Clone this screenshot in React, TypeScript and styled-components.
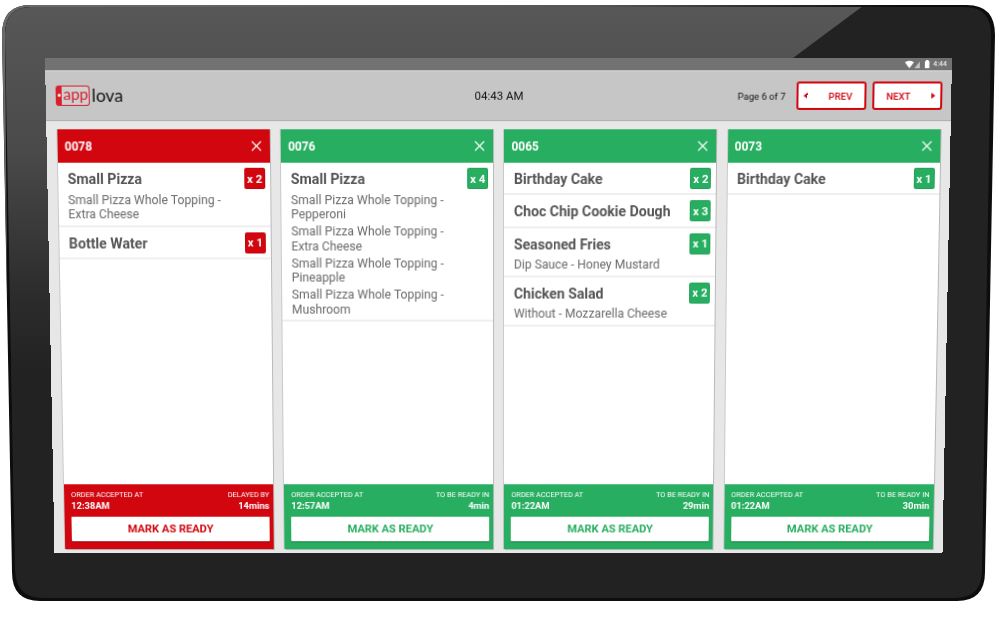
import styled, { createGlobalStyle } from 'styled-components';
import { X } from 'lucide-react';

const RED = '#d2060f';
const GREEN = '#27ae60';

const colors = { red: RED, green: GREEN };
type Tone = keyof typeof colors;

const GlobalStyle = createGlobalStyle`
  html, body {
    margin: 0;
    background: #fff;
    font-family: Roboto, "Liberation Sans", sans-serif;
  }
  * { box-sizing: border-box; }
`;

// Tablet
const Stage = styled.div`
  position: relative;
  width: 1000px;
  height: 639px;
  padding: 58px 48px 86px 45px;
  overflow: hidden;
  background: #fff;
`;

const Bezel = styled.svg`
  position: absolute;
  left: 0;
  top: 0;
`;

// the photo of the tablet is slightly tilted, so the screen is a trapezoid
const Screen = styled.div`
  position: relative;
  width: 907px;
  height: 495px;
  display: flex;
  flex-direction: column;
  transform-origin: 0 0;
  transform: matrix3d(1, 0, 0, 0, 0.0196, 1.0214, 0, 0.0000432, 0, 0, 1, 0, 0, 0, 0, 1);
`;

const StatusBar = styled.div`
  height: 12px;
  flex: none;
  display: flex;
  align-items: center;
  justify-content: flex-end;
  gap: 2px;
  padding-right: 5px;
  background: #727272;
  color: #e8e8e8;
  font-size: 7px;
  font-weight: 500;
`;

// Top bar
const TopBar = styled.header`
  height: 50px;
  flex: none;
  display: grid;
  grid-template-columns: 1fr auto 1fr;
  align-items: center;
  padding: 0 9px 0 10px;
  background: #c7c6c6;
  border-top: 1px solid #dadada;
  border-bottom: 1px solid #aeaeae;
`;

const Logo = styled.div`
  display: flex;
  align-items: center;
  gap: 2px;
`;

const LogoBadge = styled.div`
  position: relative;
  width: 34px;
  height: 20px;
  display: flex;
  align-items: center;
  justify-content: center;
  padding: 0 0 3px 1px;
  border: 1.5px solid #d6202c;
  border-left-width: 6px;
  border-radius: 3px;
  background: #cfcfcf;
  color: #d6202c;
  font-family: Lato, sans-serif;
  font-size: 15.5px;
  line-height: 1;

  &::before {
    content: '';
    position: absolute;
    left: -4.5px;
    top: 6.5px;
    width: 3px;
    height: 3px;
    border-radius: 50%;
    background: #fff;
  }
`;

const LogoWord = styled.span`
  color: #111;
  font-family: Lato, sans-serif;
  font-size: 17.5px;
  font-weight: 400;
  line-height: 1;
`;

const Clock = styled.div`
  color: #111;
  font-size: 11.5px;
`;

const Pager = styled.div`
  display: flex;
  align-items: center;
  justify-content: flex-end;
  gap: 6px;
`;

const PageLabel = styled.span`
  margin-right: 5px;
  color: #111;
  font-size: 9.5px;
`;

const PageButton = styled.button<{ $next?: boolean }>`
  width: 70px;
  height: 28px;
  display: flex;
  flex-direction: ${({ $next }) => ($next ? 'row-reverse' : 'row')};
  align-items: center;
  justify-content: space-between;
  padding: 0 5px;
  border: 2px solid ${RED};
  border-radius: 3px;
  background: #fff;
  color: ${RED};
  font-family: inherit;
  font-size: 9.6px;
  font-weight: 500;

  span {
    flex: 1;
    text-align: center;
    padding: ${({ $next }) => ($next ? '0 14px 0 0' : '0 0 0 14px')};
  }
`;

const Arrow = styled.i<{ $next?: boolean }>`
  width: 0;
  height: 0;
  border-top: 3.5px solid transparent;
  border-bottom: 3.5px solid transparent;
  ${({ $next }) => ($next ? `border-left: 4px solid ${RED};` : `border-right: 4px solid ${RED};`)}
`;

// Orders
const Board = styled.main`
  flex: 1;
  min-height: 0;
  display: grid;
  grid-template-columns: repeat(4, 213px);
  gap: 11.2px;
  padding: 8px 11px 4px 11px;
  background: #e7e7e7;
`;

const Card = styled.section`
  display: flex;
  flex-direction: column;
  min-height: 0;
  background: #fff;
  box-shadow: 1px 0 0 #b9b9b9, 1px 1px 0 #b9b9b9, -1px 0 0 #c9c9c9;
`;

const CardHead = styled.div<{ $tone: Tone }>`
  height: 33px;
  flex: none;
  display: flex;
  align-items: center;
  justify-content: space-between;
  padding: 0 5px 0 7px;
  background: ${({ $tone }) => colors[$tone]};
  color: #fff;
  font-size: 12px;
  font-weight: 700;
`;

const Items = styled.ul`
  flex: 1;
  min-height: 0;
  margin: 0;
  padding: 0;
  list-style: none;
`;

const Item = styled.li`
  display: flex;
  justify-content: space-between;
  min-height: 32.4px;
  padding: 5px 5px 3px 9.6px;
  border-bottom: 2px solid #efefef;
`;

const ItemText = styled.div`
  padding-top: 2px;
  min-width: 0;
`;

const ItemName = styled.div`
  color: #555;
  font-size: 14.2px;
  font-weight: 700;
  line-height: 18px;
`;

const Option = styled.div`
  width: 170px;
  margin-top: 4.5px;
  color: #6a6a6a;
  font-size: 12.25px;
  line-height: 14.5px;

  & + & {
    margin-top: 2.5px;
  }
`;

const Qty = styled.span<{ $tone: Tone }>`
  width: 21px;
  height: 21px;
  flex: none;
  display: flex;
  align-items: center;
  justify-content: center;
  border: 1px solid rgba(0, 0, 0, 0.07);
  border-radius: 2px;
  background: ${({ $tone }) => colors[$tone]};
  color: #fff;
  font-size: 11.5px;
  font-weight: 700;
`;

const CardFoot = styled.div<{ $tone: Tone }>`
  height: 66px;
  flex: none;
  padding: 6px 4px 5px 7px;
  background: ${({ $tone }) => colors[$tone]};
  color: #fff;
`;

const FootRow = styled.div`
  display: flex;
  justify-content: space-between;
`;

const FootCol = styled.div<{ $right?: boolean }>`
  text-align: ${({ $right }) => ($right ? 'right' : 'left')};
`;

const FootLabel = styled.div`
  font-size: 7.5px;
  line-height: 10px;
  text-transform: uppercase;
`;

const FootValue = styled.div`
  font-size: 9.5px;
  font-weight: 700;
  line-height: 11px;
`;

const ReadyButton = styled.button<{ $tone: Tone }>`
  display: block;
  width: 100%;
  height: 25px;
  margin-top: 6px;
  padding: 0;
  border: 0;
  border-radius: 1px;
  background: #fff;
  box-shadow: 0 1px 1px rgba(0, 0, 0, 0.3);
  color: ${({ $tone }) => colors[$tone]};
  font-family: inherit;
  font-size: 11.3px;
  font-weight: 700;
`;

type Order = {
  id: string;
  tone: Tone;
  items: { name: string; qty: number; options?: string[] }[];
  accepted: string;
  etaLabel: string;
  eta: string;
};

const orders: Order[] = [
  {
    id: '0078',
    tone: 'red',
    items: [
      { name: 'Small Pizza', qty: 2, options: ['Small Pizza Whole Topping - Extra Cheese'] },
      { name: 'Bottle Water', qty: 1 },
    ],
    accepted: '12:38AM',
    etaLabel: 'Delayed by',
    eta: '14mins',
  },
  {
    id: '0076',
    tone: 'green',
    items: [
      {
        name: 'Small Pizza',
        qty: 4,
        options: [
          'Small Pizza Whole Topping - Pepperoni',
          'Small Pizza Whole Topping - Extra Cheese',
          'Small Pizza Whole Topping - Pineapple',
          'Small Pizza Whole Topping - Mushroom',
        ],
      },
    ],
    accepted: '12:57AM',
    etaLabel: 'To be ready in',
    eta: '4min',
  },
  {
    id: '0065',
    tone: 'green',
    items: [
      { name: 'Birthday Cake', qty: 2 },
      { name: 'Choc Chip Cookie Dough', qty: 3 },
      { name: 'Seasoned Fries', qty: 1, options: ['Dip Sauce - Honey Mustard'] },
      { name: 'Chicken Salad', qty: 2, options: ['Without - Mozzarella Cheese'] },
    ],
    accepted: '01:22AM',
    etaLabel: 'To be ready in',
    eta: '29min',
  },
  {
    id: '0073',
    tone: 'green',
    items: [{ name: 'Birthday Cake', qty: 1 }],
    accepted: '01:22AM',
    etaLabel: 'To be ready in',
    eta: '30min',
  },
];

const BEZEL_OUTER = 'M30 5H967Q995 5 995 35L985 572Q985 601 957 601H40Q12 601 12 572L2 35Q2 5 30 5Z';
const BEZEL_INNER = 'M31 7H965Q991 7 991 35L982 570Q982 598 955 598H42Q16 598 15 570L5 35Q5 7 31 7Z';
const BEZEL_HIGHLIGHT = 'M30 5H967L960 7H31Q5 7 5 35L7.2 300L2 35Q2 5 30 5Z';

const TabletBezel = () => (
  <Bezel width="1000" height="639" viewBox="0 0 1000 639">
    <defs>
      <linearGradient id="glare" gradientUnits="userSpaceOnUse" x1="0" y1="0" x2="0" y2="600">
        <stop offset="0" stopColor="#585858" />
        <stop offset="0.25" stopColor="#4a4a4a" />
        <stop offset="0.48" stopColor="#2d2d2d" />
        <stop offset="0.62" stopColor="#222" />
      </linearGradient>
      <linearGradient id="edge" gradientUnits="userSpaceOnUse" x1="0" y1="0" x2="900" y2="300">
        <stop offset="0" stopColor="#6a6a6a" />
        <stop offset="0.6" stopColor="#555" />
        <stop offset="0.9" stopColor="#0d0d0d" />
      </linearGradient>
      <clipPath id="glareShape">
        <polygon points="0,0 871,0 793,58 45,500 0,500" />
      </clipPath>
    </defs>
    <path d={BEZEL_OUTER} fill="#0d0d0d" />
    <path d={BEZEL_HIGHLIGHT} fill="url(#edge)" />
    <path d={BEZEL_INNER} fill="#222" />
    <path d={BEZEL_INNER} fill="url(#glare)" clipPath="url(#glareShape)" />
  </Bezel>
);

const StatusIcons = () => (
  <svg width="26" height="9" viewBox="0 0 26 9">
    <path d="M0 2.2Q4.5-.6 9 2.2L4.5 8Z" fill="#fff" />
    <path d="M15 1.5V8H9.5Z" fill="#c4c4c4" />
    <rect x="20" y="1" width="4.5" height="7" rx="0.6" fill="#fff" />
    <rect x="21" y="0" width="2.5" height="1" fill="#fff" />
  </svg>
);

const OrderCard = ({ order }: { order: Order }) => (
  <Card>
    <CardHead $tone={order.tone}>
      {order.id}
      <X size={17} strokeWidth={1.6} />
    </CardHead>
    <Items>
      {order.items.map((item) => (
        <Item key={item.name}>
          <ItemText>
            <ItemName>{item.name}</ItemName>
            {item.options?.map((option) => <Option key={option}>{option}</Option>)}
          </ItemText>
          <Qty $tone={order.tone}>x {item.qty}</Qty>
        </Item>
      ))}
    </Items>
    <CardFoot $tone={order.tone}>
      <FootRow>
        <FootCol>
          <FootLabel>Order accepted at</FootLabel>
          <FootValue>{order.accepted}</FootValue>
        </FootCol>
        <FootCol $right>
          <FootLabel>{order.etaLabel}</FootLabel>
          <FootValue>{order.eta}</FootValue>
        </FootCol>
      </FootRow>
      <ReadyButton $tone={order.tone}>MARK AS READY</ReadyButton>
    </CardFoot>
  </Card>
);

const App = () => (
  <Stage>
    <GlobalStyle />
    <TabletBezel />
    <Screen>
      <StatusBar>
        <StatusIcons />
        4:44
      </StatusBar>
      <TopBar>
        <Logo>
          <LogoBadge>app</LogoBadge>
          <LogoWord>lova</LogoWord>
        </Logo>
        <Clock>04:43 AM</Clock>
        <Pager>
          <PageLabel>Page 6 of 7</PageLabel>
          <PageButton>
            <Arrow />
            <span>PREV</span>
          </PageButton>
          <PageButton $next>
            <Arrow $next />
            <span>NEXT</span>
          </PageButton>
        </Pager>
      </TopBar>
      <Board>
        {orders.map((order) => (
          <OrderCard key={order.id} order={order} />
        ))}
      </Board>
    </Screen>
  </Stage>
);

export default App;
